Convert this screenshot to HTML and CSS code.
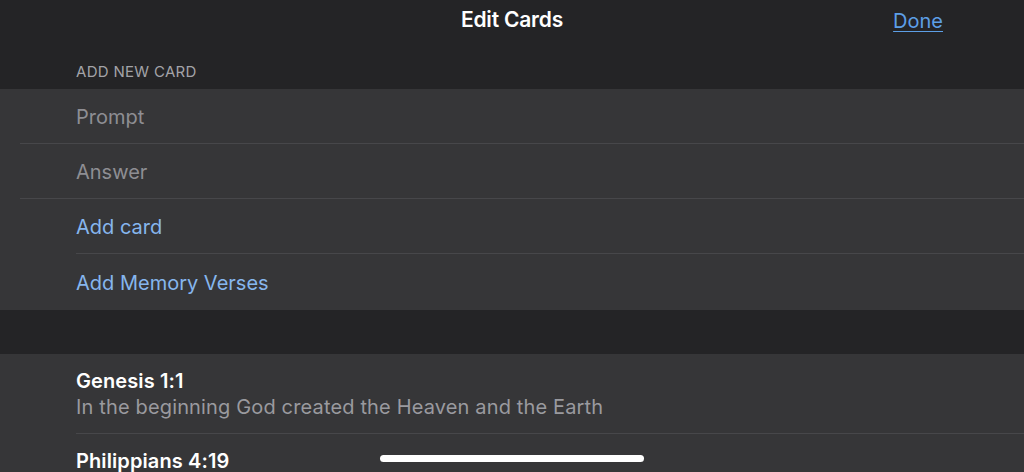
FILE: index.html
```html
<!DOCTYPE html>
<html>
<head>
<meta charset="utf-8">
<link rel="stylesheet" href="styles.css">
</head>
<body>
<div class="screen">
  <header class="nav">
    <div class="nav-title">Edit Cards</div>
    <a class="nav-done" href="#">Done</a>
  </header>
  <div class="section-label">ADD NEW CARD</div>
  <div class="group">
    <div class="row inset-sm"><span class="placeholder">Prompt</span></div>
    <div class="row inset-sm"><span class="placeholder">Answer</span></div>
    <div class="row inset-lg"><span class="link">Add card</span></div>
    <div class="row last"><span class="link">Add Memory Verses</span></div>
  </div>
  <div class="spacer"></div>
  <div class="group">
    <div class="card-row inset-lg">
      <div class="card-title">Genesis 1:1</div>
      <div class="card-sub">In the beginning God created the Heaven and the Earth</div>
    </div>
    <div class="card-row last">
      <div class="card-title">Philippians 4:19</div>
    </div>
  </div>
  <div class="home-indicator"></div>
</div>
</body>
</html>
```
FILE: styles.css
```css
* { box-sizing: border-box; }
html, body {
  margin: 0;
  padding: 0;
  background: #242426;
  height: 100%;
  overflow: hidden;
}
.screen {
  position: relative;
  width: 1024px;
  height: 472px;
  overflow: hidden;
  background: #242426;
  font-family: "Inter", "Roboto", "Liberation Sans", sans-serif;
  color: #ffffff;
}
.nav {
  position: relative;
  height: 40px;
  display: flex;
  align-items: center;
  justify-content: center;
}
.nav-title {
  font-size: 21px;
  font-weight: 600;
  letter-spacing: -0.2px;
  margin-top: -2px;
}
.nav-done {
  position: absolute;
  right: 81px;
  top: 9px;
  font-size: 20px;
  color: #5d9fe6;
  text-decoration: underline;
  text-underline-offset: 3px;
  text-decoration-thickness: 1px;
}
.section-label {
  height: 49px;
  padding: 22px 0 0 76px;
  font-size: 15px;
  color: #a3a3a8;
  letter-spacing: 0.3px;
}
.group {
  background: #363638;
}
.row {
  height: 55px;
  display: flex;
  align-items: center;
  padding-left: 76px;
  padding-top: 1px;
  font-size: 20px;
  position: relative;
}
.row::after, .card-row::after {
  content: "";
  position: absolute;
  right: 0;
  bottom: 0;
  height: 1px;
  background: #47474a;
}
.inset-sm::after { left: 20px; }
.inset-lg::after { left: 76px; }
.last::after { display: none; }
.row.last { height: 56px; }
.placeholder { color: #8e8e93; }
.link { color: #86b6ee; }
.spacer { height: 44px; }
.card-row {
  position: relative;
  padding: 15px 0 14px 76px;
}
.card-title {
  font-size: 20px;
  font-weight: 600;
  letter-spacing: 0.1px;
  line-height: 25px;
}
.card-sub {
  font-size: 20px;
  color: #9a9a9f;
  line-height: 26px;
  letter-spacing: 0.15px;
}
.home-indicator {
  position: absolute;
  left: 380px;
  top: 455px;
  width: 264px;
  height: 7px;
  border-radius: 4px;
  background: #ffffff;
}
```
